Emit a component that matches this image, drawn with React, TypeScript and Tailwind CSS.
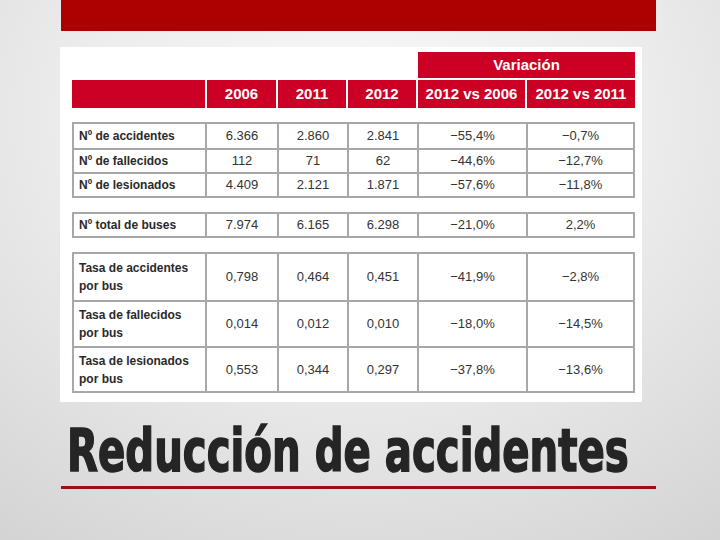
const rowsA = [
  ['Nº de accidentes', '6.366', '2.860', '2.841', '−55,4%', '−0,7%'],
  ['Nº de fallecidos', '112', '71', '62', '−44,6%', '−12,7%'],
  ['Nº de lesionados', '4.409', '2.121', '1.871', '−57,6%', '−11,8%'],
]

const rowsB = [['Nº total de buses', '7.974', '6.165', '6.298', '−21,0%', '2,2%']]

const rowsC = [
  ['Tasa de accidentes', '0,798', '0,464', '0,451', '−41,9%', '−2,8%'],
  ['Tasa de fallecidos', '0,014', '0,012', '0,010', '−18,0%', '−14,5%'],
  ['Tasa de lesionados', '0,553', '0,344', '0,297', '−37,8%', '−13,6%'],
]

const heightsC = ['h-[46px]', 'h-[46px]', 'h-[45px]']

function Group({ rows, heights, twoLine }: { rows: string[][]; heights: string[]; twoLine?: boolean }) {
  return (
    <div className="mt-[14px] w-[563px] border-2 border-[#a8a8a8]">
      {rows.map((r, i) => (
        <div
          key={r[0]}
          className={`grid grid-cols-[131px_72px_70px_70px_109px_107px] ${heights[i]} ${i > 0 ? 'border-t-2 border-[#a8a8a8]' : ''}`}
        >
          <div className="flex flex-col justify-center pl-[5px] text-[12px] font-bold leading-[18px] text-[#2a2a2a]">
            <span>{r[0]}</span>
            {twoLine && <span>por bus</span>}
          </div>
          {r.slice(1).map((v, j) => (
            <div
              key={j}
              className="flex items-center justify-center border-l-2 border-[#a8a8a8] text-[13px] text-[#333]"
            >
              {v}
            </div>
          ))}
        </div>
      ))}
    </div>
  )
}

export default function App() {
  return (
    <div className="relative h-[540px] w-[720px] overflow-hidden bg-[radial-gradient(ellipse_85%_95%_at_50%_22%,#f8f8f8_0%,#ededed_45%,#d4d4d4_100%)] font-['Liberation_Sans',Arial,sans-serif]">
      {/* barra superior */}
      <div className="ml-[61px] h-[31px] w-[595px] bg-[#ad0000]" />

      {/* tabla (imagen) */}
      <div className="ml-[60px] mt-[16px] h-[355px] w-[582px] bg-white pl-[12px] pt-[5px]">
        <div className="flex">
          <div className="w-[346px]" />
          <div className="flex h-[26px] w-[217px] items-center justify-center bg-[#cc0025] text-[15px] font-bold text-white">
            Variación
          </div>
        </div>
        <div className="mt-[2px] grid h-[28px] w-[563px] grid-cols-[133px_69px_68px_68px_107px_108px] gap-x-[2px] text-[15px] font-bold text-white">
          <div className="bg-[#cc0025]" />
          {['2006', '2011', '2012', '2012 vs 2006', '2012 vs 2011'].map((h) => (
            <div key={h} className="flex items-center justify-center bg-[#cc0025]">
              {h}
            </div>
          ))}
        </div>

        <Group rows={rowsA} heights={['h-[24px]', 'h-[24px]', 'h-[24px]']} />
        <Group rows={rowsB} heights={['h-[22px]']} />
        <Group rows={rowsC} heights={heightsC} twoLine />
      </div>

      {/* título */}
      <div className="ml-[67px] mt-[21px] h-[57px] whitespace-nowrap font-['DejaVu_Sans_Condensed','DejaVu_Sans',sans-serif] text-[57px] font-bold leading-none text-[#252525]">
        <span className="inline-block origin-[0_48px] scale-x-[0.785] scale-y-[1.04] [-webkit-text-stroke:1.5px_#252525]">
          Reducción de accidentes
        </span>
      </div>
      <div className="ml-[61px] mt-[6px] h-[3px] w-[595px] bg-[#9b1111]" />
    </div>
  )
}
